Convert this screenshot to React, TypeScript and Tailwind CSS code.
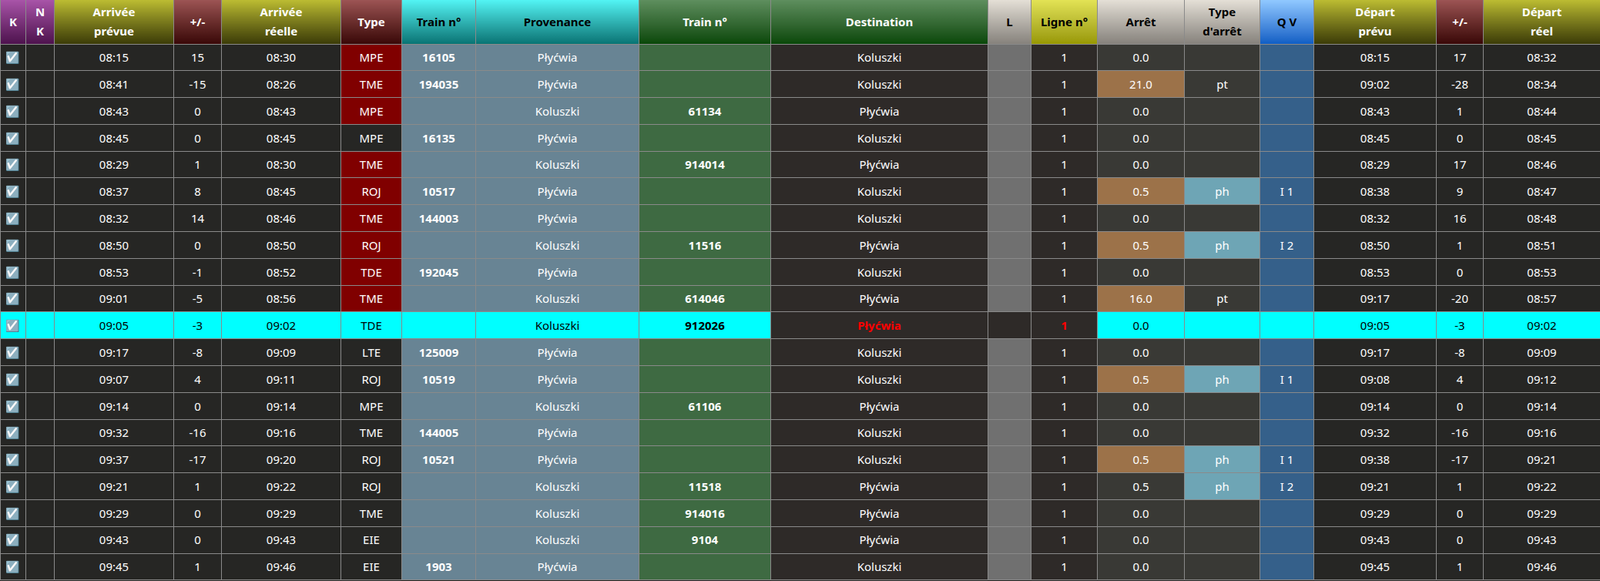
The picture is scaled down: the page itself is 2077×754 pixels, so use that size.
type Row = {
  ap: string; d1: string; ar: string; type: string; red: boolean;
  tin: string; prov: string; tout: string; dest: string;
  stop: string; stopHi: boolean; st: string; qv: string;
  dp: string; d2: string; dr: string; hi?: boolean;
};

const P = 'Płyćwia';
const K = 'Koluszki';

const rows: Row[] = [
  { ap: '08:15', d1: '15', ar: '08:30', type: 'MPE', red: true, tin: '16105', prov: P, tout: '', dest: K, stop: '0.0', stopHi: false, st: '', qv: '', dp: '08:15', d2: '17', dr: '08:32' },
  { ap: '08:41', d1: '-15', ar: '08:26', type: 'TME', red: true, tin: '194035', prov: P, tout: '', dest: K, stop: '21.0', stopHi: true, st: 'pt', qv: '', dp: '09:02', d2: '-28', dr: '08:34' },
  { ap: '08:43', d1: '0', ar: '08:43', type: 'MPE', red: true, tin: '', prov: K, tout: '61134', dest: P, stop: '0.0', stopHi: false, st: '', qv: '', dp: '08:43', d2: '1', dr: '08:44' },
  { ap: '08:45', d1: '0', ar: '08:45', type: 'MPE', red: false, tin: '16135', prov: P, tout: '', dest: K, stop: '0.0', stopHi: false, st: '', qv: '', dp: '08:45', d2: '0', dr: '08:45' },
  { ap: '08:29', d1: '1', ar: '08:30', type: 'TME', red: true, tin: '', prov: K, tout: '914014', dest: P, stop: '0.0', stopHi: false, st: '', qv: '', dp: '08:29', d2: '17', dr: '08:46' },
  { ap: '08:37', d1: '8', ar: '08:45', type: 'ROJ', red: true, tin: '10517', prov: P, tout: '', dest: K, stop: '0.5', stopHi: true, st: 'ph', qv: 'I 1', dp: '08:38', d2: '9', dr: '08:47' },
  { ap: '08:32', d1: '14', ar: '08:46', type: 'TME', red: true, tin: '144003', prov: P, tout: '', dest: K, stop: '0.0', stopHi: false, st: '', qv: '', dp: '08:32', d2: '16', dr: '08:48' },
  { ap: '08:50', d1: '0', ar: '08:50', type: 'ROJ', red: true, tin: '', prov: K, tout: '11516', dest: P, stop: '0.5', stopHi: true, st: 'ph', qv: 'I 2', dp: '08:50', d2: '1', dr: '08:51' },
  { ap: '08:53', d1: '-1', ar: '08:52', type: 'TDE', red: true, tin: '192045', prov: P, tout: '', dest: K, stop: '0.0', stopHi: false, st: '', qv: '', dp: '08:53', d2: '0', dr: '08:53' },
  { ap: '09:01', d1: '-5', ar: '08:56', type: 'TME', red: true, tin: '', prov: K, tout: '614046', dest: P, stop: '16.0', stopHi: true, st: 'pt', qv: '', dp: '09:17', d2: '-20', dr: '08:57' },
  { ap: '09:05', d1: '-3', ar: '09:02', type: 'TDE', red: false, tin: '', prov: K, tout: '912026', dest: P, stop: '0.0', stopHi: false, st: '', qv: '', dp: '09:05', d2: '-3', dr: '09:02', hi: true },
  { ap: '09:17', d1: '-8', ar: '09:09', type: 'LTE', red: false, tin: '125009', prov: P, tout: '', dest: K, stop: '0.0', stopHi: false, st: '', qv: '', dp: '09:17', d2: '-8', dr: '09:09' },
  { ap: '09:07', d1: '4', ar: '09:11', type: 'ROJ', red: false, tin: '10519', prov: P, tout: '', dest: K, stop: '0.5', stopHi: true, st: 'ph', qv: 'I 1', dp: '09:08', d2: '4', dr: '09:12' },
  { ap: '09:14', d1: '0', ar: '09:14', type: 'MPE', red: false, tin: '', prov: K, tout: '61106', dest: P, stop: '0.0', stopHi: false, st: '', qv: '', dp: '09:14', d2: '0', dr: '09:14' },
  { ap: '09:32', d1: '-16', ar: '09:16', type: 'TME', red: false, tin: '144005', prov: P, tout: '', dest: K, stop: '0.0', stopHi: false, st: '', qv: '', dp: '09:32', d2: '-16', dr: '09:16' },
  { ap: '09:37', d1: '-17', ar: '09:20', type: 'ROJ', red: false, tin: '10521', prov: P, tout: '', dest: K, stop: '0.5', stopHi: true, st: 'ph', qv: 'I 1', dp: '09:38', d2: '-17', dr: '09:21' },
  { ap: '09:21', d1: '1', ar: '09:22', type: 'ROJ', red: false, tin: '', prov: K, tout: '11518', dest: P, stop: '0.5', stopHi: false, st: 'ph', qv: 'I 2', dp: '09:21', d2: '1', dr: '09:22' },
  { ap: '09:29', d1: '0', ar: '09:29', type: 'TME', red: false, tin: '', prov: K, tout: '914016', dest: P, stop: '0.0', stopHi: false, st: '', qv: '', dp: '09:29', d2: '0', dr: '09:29' },
  { ap: '09:43', d1: '0', ar: '09:43', type: 'EIE', red: false, tin: '', prov: K, tout: '9104', dest: P, stop: '0.0', stopHi: false, st: '', qv: '', dp: '09:43', d2: '0', dr: '09:43' },
  { ap: '09:45', d1: '1', ar: '09:46', type: 'EIE', red: false, tin: '1903', prov: P, tout: '', dest: K, stop: '0.0', stopHi: false, st: '', qv: '', dp: '09:45', d2: '1', dr: '09:46' },
];

const OLIVE = 'bg-gradient-to-b from-[#bcbc32] to-[#3c3c08] text-white';
const MAROON = 'bg-gradient-to-b from-[#9c5454] to-[#3a0808] text-white';
const CYAN = 'bg-gradient-to-b from-[#52f4f4] to-[#087474] text-black';
const GREEN = 'bg-gradient-to-b from-[#5e8e5e] to-[#084808] text-white';
const GREY = 'bg-gradient-to-b from-[#e4dfd6] to-[#86827c] text-black';

const headers: { label: React.ReactNode; w: string; cls: string }[] = [
  { label: 'K', w: 'w-[33px]', cls: 'bg-gradient-to-b from-[#a854a8] to-[#4e124e] text-white' },
  { label: <>N<br />K</>, w: 'w-[37px]', cls: 'bg-gradient-to-b from-[#a854a8] to-[#4e124e] text-white' },
  { label: <>Arrivée<br />prévue</>, w: 'w-[155px]', cls: OLIVE },
  { label: '+/-', w: 'w-[62px]', cls: MAROON },
  { label: <>Arrivée<br />réelle</>, w: 'w-[155px]', cls: OLIVE },
  { label: 'Type', w: 'w-[79px]', cls: MAROON },
  { label: 'Train n°', w: 'w-[96px]', cls: CYAN },
  { label: 'Provenance', w: 'w-[212px]', cls: CYAN },
  { label: 'Train n°', w: 'w-[171px]', cls: GREEN },
  { label: 'Destination', w: 'w-[282px]', cls: GREEN },
  { label: 'L', w: 'w-[56px]', cls: GREY },
  { label: 'Ligne n°', w: 'w-[86px]', cls: 'bg-gradient-to-b from-[#e2e254] to-[#989800] text-black' },
  { label: 'Arrêt', w: 'w-[113px]', cls: GREY },
  { label: <>Type<br />d'arrêt</>, w: 'w-[98px]', cls: GREY },
  { label: 'Q V', w: 'w-[70px]', cls: 'bg-gradient-to-b from-[#90c8ff] to-[#0e5ec4] text-black' },
  { label: <>Départ<br />prévu</>, w: 'w-[159px]', cls: OLIVE },
  { label: '+/-', w: 'w-[61px]', cls: MAROON },
  { label: <>Départ<br />réel</>, w: 'w-[152px]', cls: OLIVE },
];

const DARK = 'bg-[#262624] text-white';
const DEST = 'bg-[#2e2a28] text-white';
const CY = 'bg-[#00ffff] text-black';

export default function App() {
  return (
    <div className="w-[2077px] h-[754px] overflow-hidden bg-[#262624] font-['Liberation_Sans',Arial,sans-serif] text-[15px]">
      <table className="w-[2077px] table-fixed border-collapse">
        <thead>
          <tr className="h-[57px]">
            {headers.map((h, i) => (
              <th key={i} className={`${h.w} ${h.cls} border-x border-[#8a8a8a] text-center text-[15px] font-bold leading-[25px] p-0`}>
                {h.label}
              </th>
            ))}
          </tr>
        </thead>
        <tbody>
          {rows.map((r, i) => {
            const base = r.hi ? CY : DARK;
            const td = 'border border-[#8a8a8a] text-center p-0';
            return (
              <tr key={i} className="h-[34.8px]">
                <td className={`${td} ${base}`}>☑</td>
                <td className={`${td} ${base}`}></td>
                <td className={`${td} ${base}`}>{r.ap}</td>
                <td className={`${td} ${base}`}>{r.d1}</td>
                <td className={`${td} ${base}`}>{r.ar}</td>
                <td className={`${td} ${r.hi ? CY : r.red ? 'bg-[#800000] text-white' : DARK}`}>{r.type}</td>
                <td className={`${td} font-bold ${r.hi ? CY : 'bg-[#688494] text-white'}`}>{r.tin}</td>
                <td className={`${td} ${r.hi ? CY : 'bg-[#688494] text-white'}`}>{r.prov}</td>
                <td className={`${td} font-bold ${r.hi ? CY : 'bg-[#3e6a42] text-white'}`}>{r.tout}</td>
                <td className={`${td} ${r.hi ? 'bg-[#2e2a28] text-[#ff0000] font-bold' : DEST}`}>{r.dest}</td>
                <td className={`${td} ${r.hi ? 'bg-[#2e2a28]' : 'bg-[#707070]'}`}></td>
                <td className={`${td} ${r.hi ? 'bg-[#2e2a28] text-[#ff0000] font-bold' : DEST}`}>1</td>
                <td className={`${td} ${r.hi ? CY : r.stopHi ? 'bg-[#9c7249] text-white' : 'bg-[#393935] text-white'}`}>{r.stop}</td>
                <td className={`${td} ${r.hi ? CY : r.st === 'ph' ? 'bg-[#6ea5b5] text-white' : 'bg-[#393935] text-white'}`}>{r.st}</td>
                <td className={`${td} ${r.hi ? CY : 'bg-[#35608a] text-white'}`}>{r.qv}</td>
                <td className={`${td} ${base}`}>{r.dp}</td>
                <td className={`${td} ${base}`}>{r.d2}</td>
                <td className={`${td} ${base}`}>{r.dr}</td>
              </tr>
            );
          })}
        </tbody>
      </table>
    </div>
  );
}
